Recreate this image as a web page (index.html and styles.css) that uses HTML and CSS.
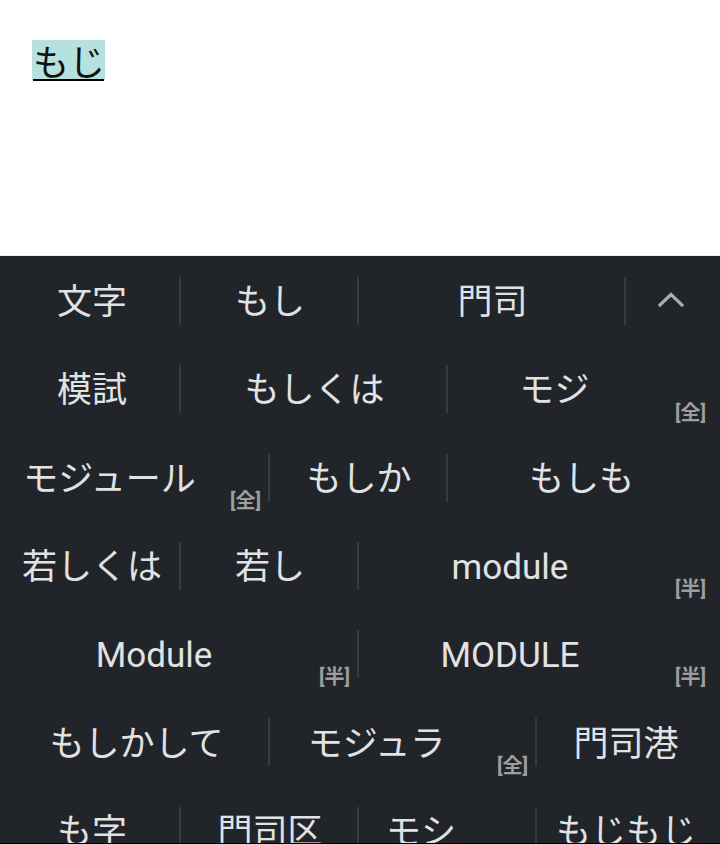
FILE: index.html
```html
<!DOCTYPE html>
<html lang="ja">
<head>
<meta charset="utf-8">
<link rel="stylesheet" href="styles.css">
</head>
<body>
<div class="editor">
  <span class="composing">もじ</span>
</div>
<div class="keyboard">
  <div class="row">
    <div class="cell s2">文字</div>
    <div class="cell s2 div">もし</div>
    <div class="cell s3 div">門司</div>
    <div class="cell s1 div">
      <svg class="chev" width="26" height="16" viewBox="0 0 26 16"><polyline points="2,13 13,2.5 24,13" fill="none" stroke="#a9abad" stroke-width="3.2" stroke-linecap="square"/></svg>
    </div>
  </div>
  <div class="row">
    <div class="cell s2">模試</div>
    <div class="cell s3 div">もしくは</div>
    <div class="cell s3 div badged">モジ<span class="badge">[全]</span></div>
  </div>
  <div class="row">
    <div class="cell s3 badged">モジュール<span class="badge">[全]</span></div>
    <div class="cell s2 div">もしか</div>
    <div class="cell s3 div">もしも</div>
  </div>
  <div class="row">
    <div class="cell s2">若しくは</div>
    <div class="cell s2 div">若し</div>
    <div class="cell s4 div badged">module<span class="badge">[半]</span></div>
  </div>
  <div class="row">
    <div class="cell s4 badged">Module<span class="badge">[半]</span></div>
    <div class="cell s4 div badged">MODULE<span class="badge">[半]</span></div>
  </div>
  <div class="row">
    <div class="cell s3">もしかして</div>
    <div class="cell s3 div badged">モジュラ<span class="badge">[全]</span></div>
    <div class="cell s2 div">門司港</div>
  </div>
  <div class="row">
    <div class="cell s2">も字</div>
    <div class="cell s2 div">門司区</div>
    <div class="cell s2 div badged">モシ<span class="badge">[全]</span></div>
    <div class="cell s2 div">もじもじ</div>
  </div>
</div>
<div class="navedge"></div>
</body>
</html>
```
FILE: styles.css
```css
html, body {
  margin: 0;
  padding: 0;
}
body {
  width: 720px;
  height: 844px;
  overflow: hidden;
  background: #ffffff;
  font-family: Roboto, "Noto Sans CJK JP", sans-serif;
}
.editor {
  height: 256px;
  box-sizing: border-box;
  padding: 40px 0 0 32px;
  border-bottom: 1px solid #ececec;
  background: #ffffff;
}
.composing {
  position: relative;
  display: inline-block;
  height: 40px;
  line-height: 40px;
  font-size: 36px;
  color: #111111;
  background: #b6e1de;
  padding: 0 0 0 1px;
  font-family: "Noto Sans CJK JP", sans-serif;
}
.composing::after {
  content: "";
  position: absolute;
  left: 1px;
  right: 1px;
  bottom: -1px;
  height: 2px;
  background: #000000;
}
.keyboard {
  height: 587px;
  overflow: hidden;
  background: #212529;
  box-sizing: border-box;
  padding-left: 3px;
}
.row {
  display: grid;
  grid-template-columns: repeat(8, 89px);
  height: 88.3px;
}
.cell {
  position: relative;
  display: flex;
  align-items: center;
  justify-content: center;
  white-space: nowrap;
  color: #e1e2e3;
  font-size: 35px;
  line-height: 1;
  padding-top: 5px;
  box-sizing: border-box;
}
.s1 { grid-column: span 1; }
.s2 { grid-column: span 2; }
.s3 { grid-column: span 3; }
.s4 { grid-column: span 4; }
.div::before {
  content: "";
  position: absolute;
  left: -2px;
  top: 21px;
  width: 2px;
  height: 48px;
  background: #373b40;
}
.badged {
  padding-right: 54px;
}
.badge {
  position: absolute;
  right: 9px;
  bottom: 10px;
  font-size: 20px;
  font-weight: 700;
  line-height: 1;
  color: #9c9ea0;
}
.chev {
  display: block;
  margin-top: -6px;
}
.navedge {
  height: 1px;
  background: #000000;
}
```
